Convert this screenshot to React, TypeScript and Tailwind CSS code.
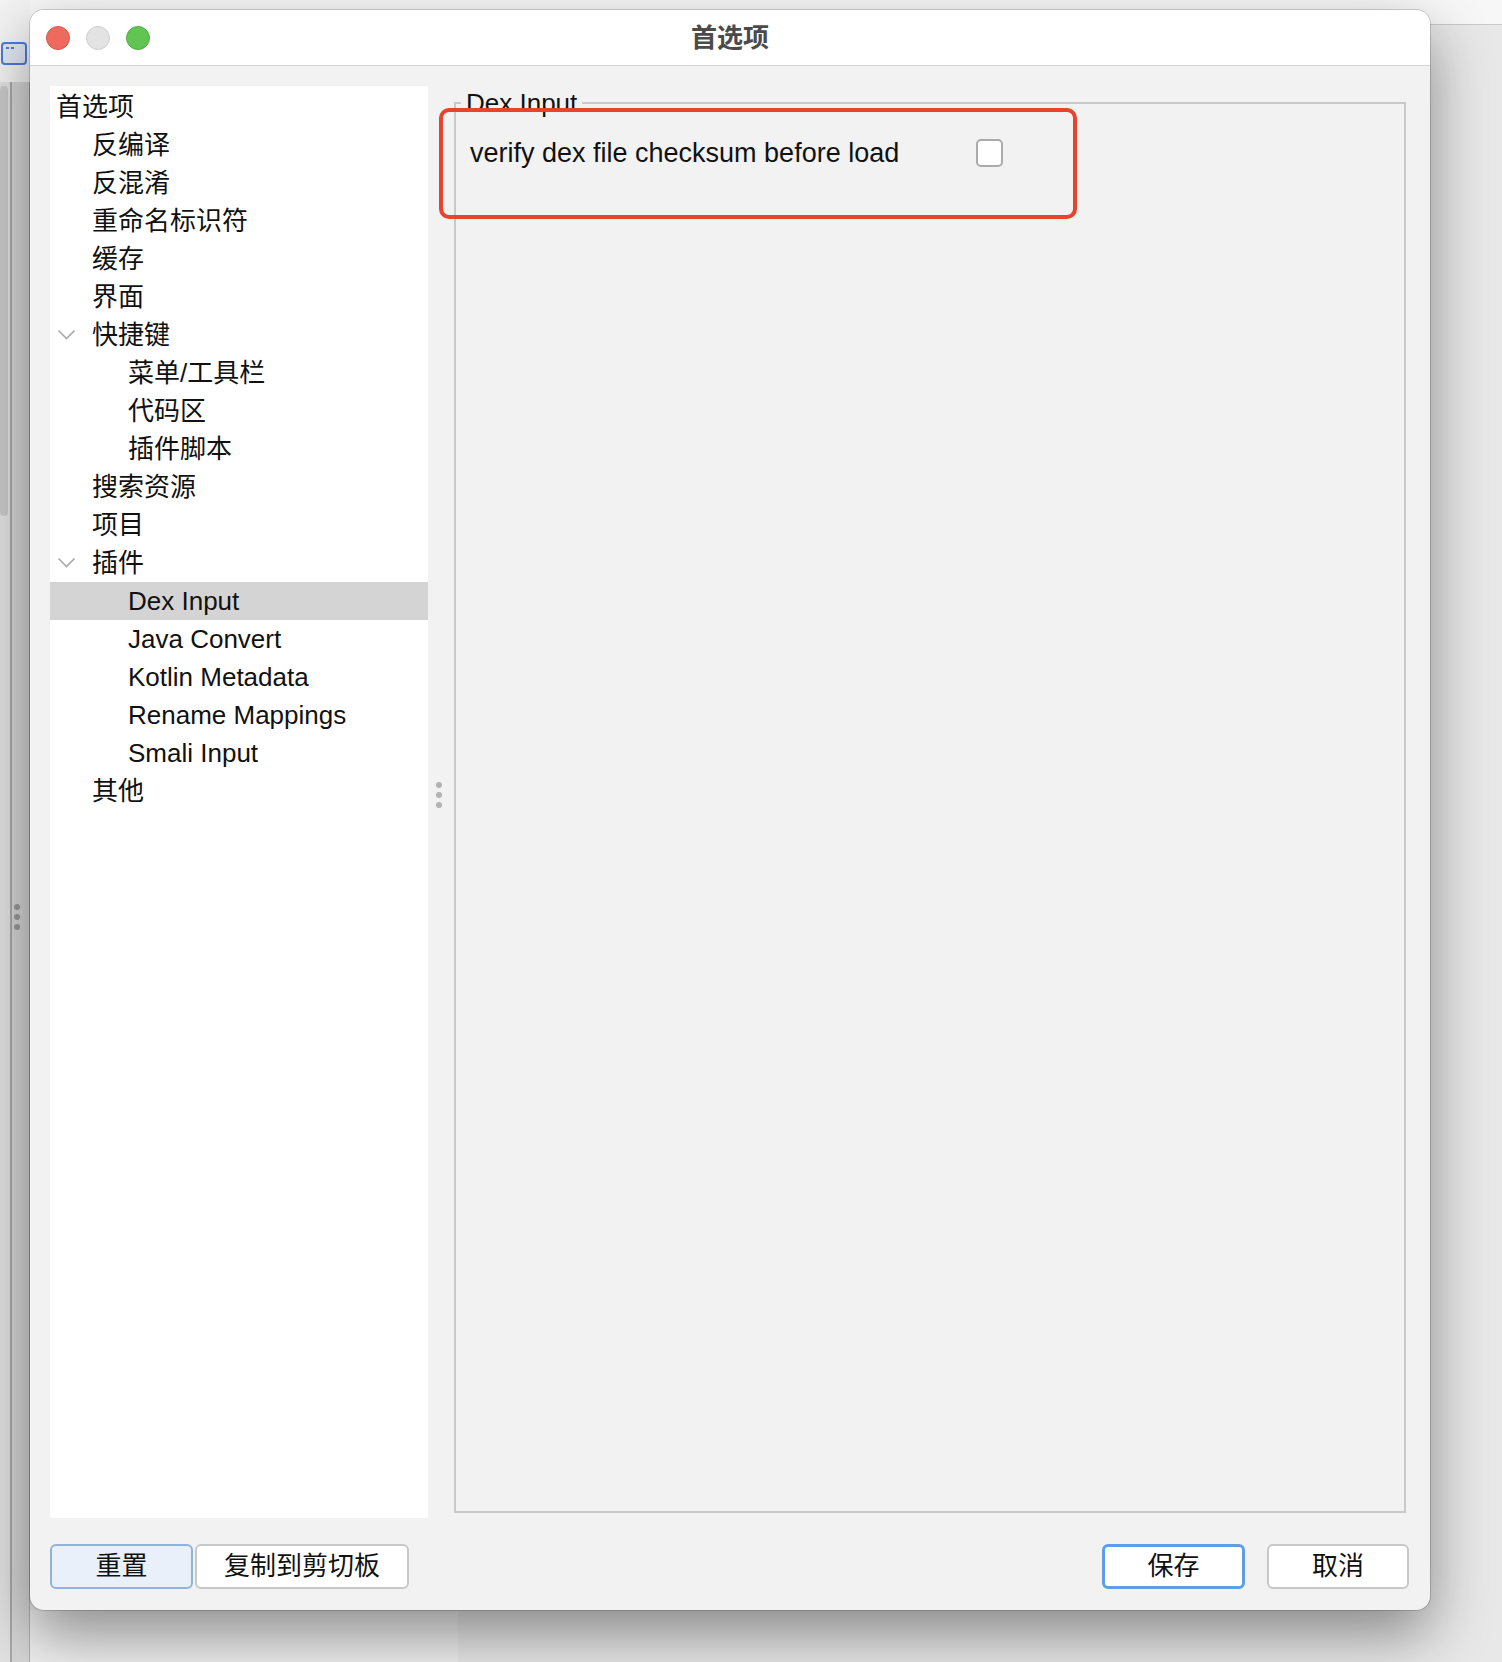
import React from 'react'

type Node = { label: string; level: number; open?: boolean; selected?: boolean }

const tree: Node[] = [
  { label: '首选项', level: 0 },
  { label: '反编译', level: 1 },
  { label: '反混淆', level: 1 },
  { label: '重命名标识符', level: 1 },
  { label: '缓存', level: 1 },
  { label: '界面', level: 1 },
  { label: '快捷键', level: 1, open: true },
  { label: '菜单/工具栏', level: 2 },
  { label: '代码区', level: 2 },
  { label: '插件脚本', level: 2 },
  { label: '搜索资源', level: 1 },
  { label: '项目', level: 1 },
  { label: '插件', level: 1, open: true },
  { label: 'Dex Input', level: 2, selected: true },
  { label: 'Java Convert', level: 2 },
  { label: 'Kotlin Metadata', level: 2 },
  { label: 'Rename Mappings', level: 2 },
  { label: 'Smali Input', level: 2 },
  { label: '其他', level: 1 },
]

const Chevron = () => (
  <svg width="20" height="12" viewBox="0 0 20 12" className="ml-[1px]">
    <polyline points="1.5,1.5 9.5,9.5 17.5,1.5" fill="none" stroke="#a9a9a9" strokeWidth="1.6" />
  </svg>
)

const TreeRow = ({ node }: { node: Node }) => {
  const slots = Array.from({ length: node.level })
  return (
    <div className={node.selected ? 'h-[38px] flex items-center pl-[6px] bg-[#d4d4d4]' : 'h-[38px] flex items-center pl-[6px]'}>
      {slots.map((_, i) => (
        <div key={i} className="w-[36px] flex items-center">
          {node.open && i === node.level - 1 ? <Chevron /> : null}
        </div>
      ))}
      <span className="text-[26px] leading-none text-[#111] whitespace-nowrap">{node.label}</span>
    </div>
  )
}

const Dot = () => <div className="w-[6px] h-[6px] rounded-full bg-[#b3b3b3]" />

const App = () => {
  return (
    <div className="relative w-[1502px] h-[1662px] overflow-hidden bg-[#e8e8e8] font-['Liberation_Sans','Noto_Sans_CJK_SC',sans-serif]">
      {/* app behind the dialog */}
      <div className="absolute top-0 left-0 right-0 h-[25px] bg-[#f7f7f7] border-b border-[#c9c9c9]" />
      <div className="absolute left-0 top-[1610px] w-[458px] bottom-0 bg-[#efefef]" />
      <div className="absolute left-0 top-0 w-[30px] h-full flex flex-col">
        <div className="h-[82px] bg-[#f3f3f3] pt-[42px] pl-[1px]">
          <div className="w-[26px] h-[23px] border-2 border-[#4f7bd8] rounded-[4px] bg-[#e2e8f4] flex gap-[2px] pl-[3px] pt-[3px]">
            <div className="w-[3px] h-[2px] bg-[#4f7bd8]" />
            <div className="w-[3px] h-[2px] bg-[#4f7bd8]" />
          </div>
        </div>
        <div className="flex-1 flex">
          <div className="w-[10px] bg-[#e2e2e2] pt-[4px]">
            <div className="w-[8px] h-[430px] rounded-[4px] bg-[#c9c9c9]" />
          </div>
          <div className="w-[2px] bg-[#a8a8a8]" />
          <div className="w-[17px] bg-[#d6d6d6] flex flex-col items-start pl-[2px] pt-[822px] gap-[4px]">
            <div className="w-[6px] h-[6px] rounded-full bg-[#9a9a9a]" />
            <div className="w-[6px] h-[6px] rounded-full bg-[#9a9a9a]" />
            <div className="w-[6px] h-[6px] rounded-full bg-[#9a9a9a]" />
          </div>
          <div className="w-[1px] bg-[#b0b0b0]" />
        </div>
      </div>

      {/* dialog */}
      <div className="absolute left-[30px] top-[10px] w-[1400px] h-[1600px] rounded-[14px] overflow-hidden bg-[#f2f2f2] flex flex-col shadow-[0_0_0_1px_rgba(0,0,0,0.16),0_24px_60px_rgba(0,0,0,0.42)]">
        <div className="h-[56px] shrink-0 bg-white border-b border-[#d3d3d3] relative flex items-center justify-center">
          <div className="absolute left-[16px] top-[16px] flex gap-[16px]">
            <div className="w-[24px] h-[24px] rounded-full bg-[#ee6a5f] border border-[#d8574c]" />
            <div className="w-[24px] h-[24px] rounded-full bg-[#e3e3e3] border border-[#cfcfcf]" />
            <div className="w-[24px] h-[24px] rounded-full bg-[#61c554] border border-[#50ad45]" />
          </div>
          <span className="text-[26px] font-bold text-[#4b4b4b] leading-none">首选项</span>
        </div>

        <div className="relative flex-1 flex flex-col pt-[20px]">
          <div className="flex pl-[20px] pr-[24px]">
            <div className="w-[378px] h-[1432px] bg-white pt-[2px]">
              {tree.map((n, i) => (
                <TreeRow key={i} node={n} />
              ))}
            </div>

            <div className="w-[26px] flex flex-col justify-center gap-[4px] pl-[8px] pb-[14px]">
              <Dot />
              <Dot />
              <Dot />
            </div>

            <fieldset className="w-[952px] h-[1427px] border-2 border-[#c9c9c9]">
              <legend className="ml-[5px] px-[5px] text-[26px] leading-[34px] text-[#111]">Dex Input</legend>
              <div className="flex items-center h-[28px] mt-[19px] pl-[14px]">
                <span className="w-[506px] text-[27px] leading-none text-[#111]">verify dex file checksum before load</span>
                <div className="w-[27px] h-[28px] bg-white border-2 border-[#ababab] rounded-[5px]" />
              </div>
            </fieldset>
          </div>

          <div className="flex justify-between mt-[26px] pl-[20px] pr-[21px]">
            <div className="flex gap-[2px]">
              <div className="w-[143px] h-[45px] rounded-[6px] bg-[#e9f0fa] border-2 border-[#90b2dc] flex items-center justify-center text-[26px] text-[#111]">重置</div>
              <div className="w-[214px] h-[45px] rounded-[6px] bg-white border-2 border-[#c8c8c8] flex items-center justify-center text-[26px] text-[#111]">复制到剪切板</div>
            </div>
            <div className="flex gap-[22px]">
              <div className="w-[143px] h-[45px] rounded-[6px] bg-white border-[3px] border-[#5f9ee7] flex items-center justify-center text-[26px] text-[#111]">保存</div>
              <div className="w-[142px] h-[45px] rounded-[6px] bg-white border-2 border-[#c8c8c8] flex items-center justify-center text-[26px] text-[#111]">取消</div>
            </div>
          </div>

          {/* annotation */}
          <div className="absolute left-[409px] top-[42px] w-[638px] h-[111px] border-4 border-[#e8432c] rounded-[10px]" />
        </div>
      </div>
    </div>
  )
}

export default App
